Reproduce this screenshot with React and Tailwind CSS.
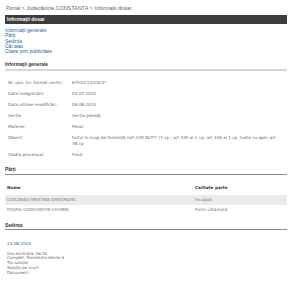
import React from 'react';

const ROWS = [
  ['Nr. unic (nr. format vechi) :', '6754/212/2023*'],
  ['Data înregistrării', '03.07.2023'],
  ['Data ultimei modificări:', '09.08.2024'],
  ['Secție:', 'Secția penală'],
  ['Materie:', 'Penal'],
  [
    'Obiect:',
    'furtul în scop de folosință (art.239 NCP)* (1 cp ; art 335 al 1 cp; art 336 al 1 cp, toate cu aplic art 38 cp',
  ],
  ['Stadiu procesual:', 'Fond'],
];

const PARTI = [
  ['CIOCANAȘ HRISTINA GHEORGHE', 'Inculpat'],
  ['POȘPAI CONSTANTIN-COSMIN', 'Parte vătămată'],
];

const LINKS = ['Informații generale', 'Părți', 'Ședința', 'Căi atac', 'Citare prin publicitate'];

const SEDINTA = [
  'Ora estimată: 08:30',
  'Complet: Familie/Incidente 6',
  'Tip soluție:',
  'Soluția pe scurt:',
  'Document:',
];

export default function App() {
  return (
    <div className="h-[283px] w-[300px] overflow-hidden bg-white pl-[5px] pr-[13px] font-['Liberation_Sans',Arial,sans-serif]">
      {/* breadcrumb */}
      <div className="pt-[5px] pl-[1px] text-[5.4px] leading-[6px] text-[#666]">
        Portal &gt; Judecătoria CONSTANȚA &gt; Informații dosar
      </div>

      <div className="mt-[4px] h-[9px] bg-[#3c3c3c] pl-[2px] text-[5px] font-bold leading-[9px] text-white">
        Informații dosar
      </div>

      {/* anchors */}
      <div className="flex flex-col pt-[4px] text-[5px] leading-[5.3px] text-[#2b63a6]">
        {LINKS.map((l) => (
          <a key={l} href="#">
            {l}
          </a>
        ))}
      </div>

      {/* general info */}
      <div className="mt-[7.5px] border-b-[2px] border-[#d6d6d6] pb-[1px] text-[4.8px] font-bold leading-[6px] text-[#333]">
        Informații generale
      </div>
      <div className="mt-[6.5px] font-['DejaVu_Sans',Verdana,sans-serif] text-[4.2px] text-[#666]">
        {ROWS.map(([label, value]) => (
          <div key={label} className="flex py-[2.5px] leading-[6px]">
            <div className="w-[67px] shrink-0 pl-[3px]">{label}</div>
            <div className="w-[210px]">{value}</div>
          </div>
        ))}
      </div>

      {/* parties */}
      <div className="mt-[6.5px] border-b border-[#8a8a8a] pb-[1px] text-[4.8px] font-bold leading-[6px] text-[#333]">
        Părți
      </div>
      <div className="mt-[10px] font-['DejaVu_Sans',Verdana,sans-serif] text-[4.2px]">
        <div className="mb-[4px] flex h-[6px] items-center font-bold text-[#333]">
          <div className="w-[190px] pl-[2px]">Nume</div>
          <div>Calitate parte</div>
        </div>
        {PARTI.map(([name, role], i) => (
          <div
            key={name}
            className={'flex h-[10px] items-center text-[#777] ' + (i === 0 ? 'bg-[#ebebeb]' : '')}
          >
            <div className="w-[190px] pl-[2px]">{name}</div>
            <div>{role}</div>
          </div>
        ))}
      </div>

      {/* hearing */}
      <div className="mt-[8px] border-b border-[#8a8a8a] text-[4.8px] font-bold leading-[6px] text-[#333]">
        Ședința
      </div>
      <div className="mt-[11px] pl-[2px] font-['DejaVu_Sans',Verdana,sans-serif] text-[4.2px] leading-[6px] text-[#2b63a6]">
        23.08.2024
      </div>
      <div className="mt-[4.6px] flex flex-col pl-[2px] font-['DejaVu_Sans',Verdana,sans-serif] text-[4px] leading-[4.8px] text-[#666]">
        {SEDINTA.map((s) => (
          <div key={s}>{s}</div>
        ))}
      </div>
    </div>
  );
}
